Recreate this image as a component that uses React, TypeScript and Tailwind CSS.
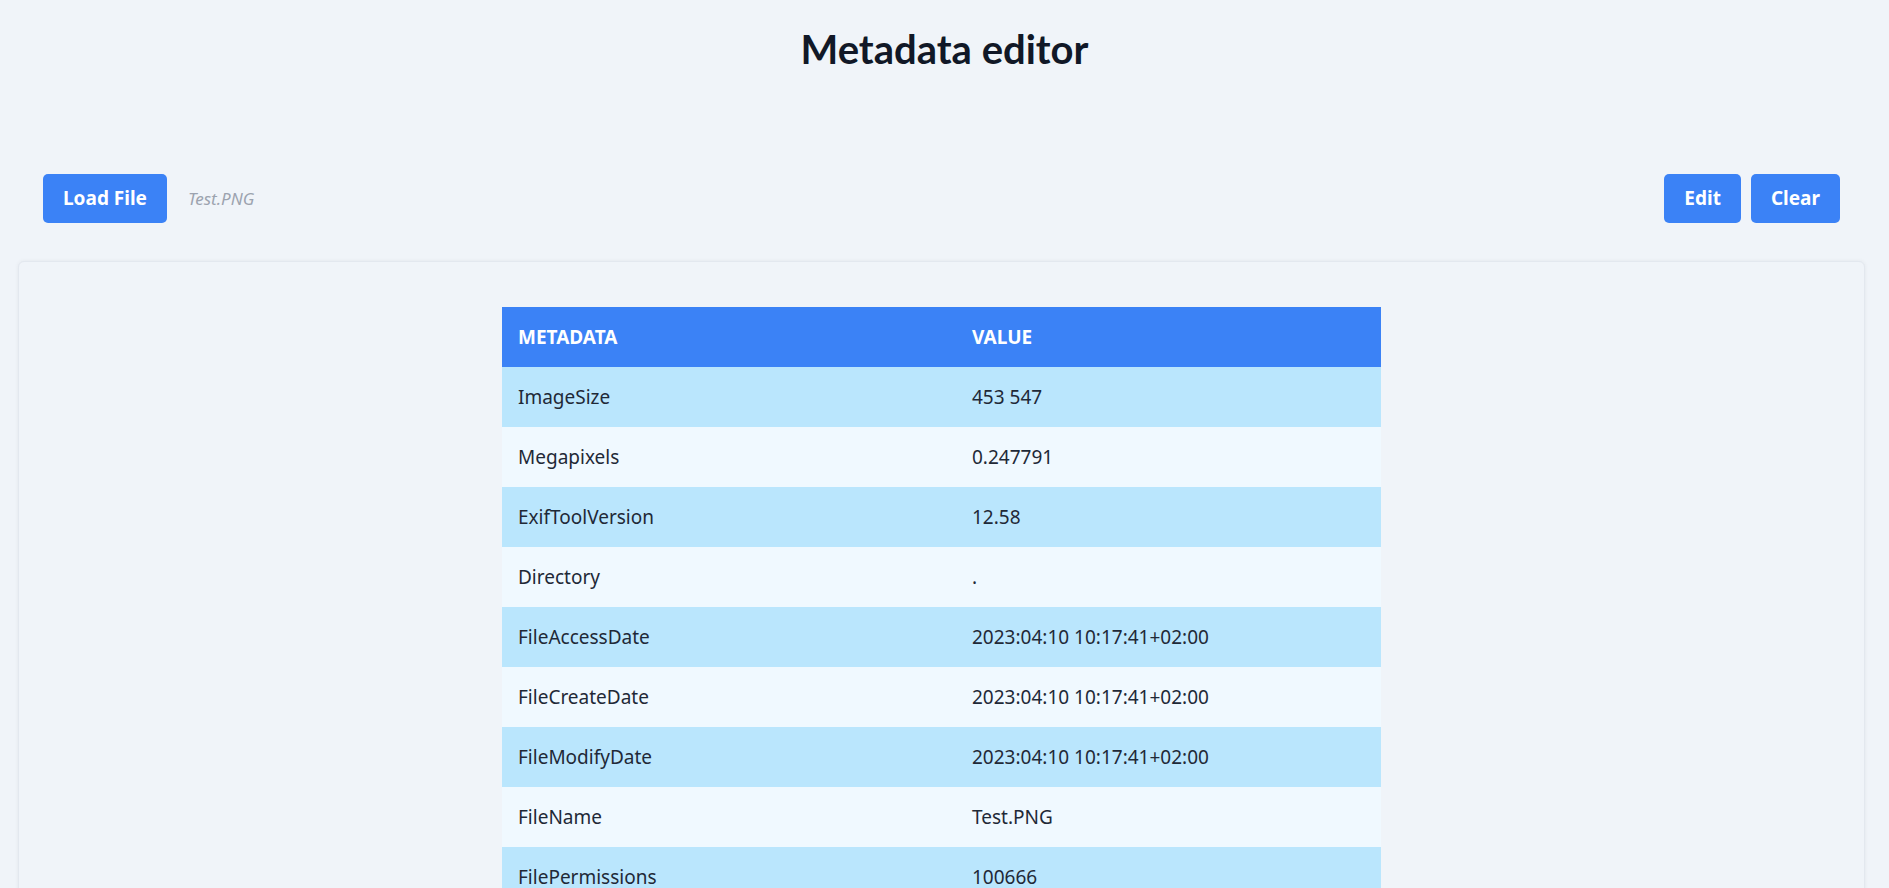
import React from 'react';

const rows: [string, string][] = [
  ['ImageSize', '453 547'],
  ['Megapixels', '0.247791'],
  ['ExifToolVersion', '12.58'],
  ['Directory', '.'],
  ['FileAccessDate', '2023:04:10 10:17:41+02:00'],
  ['FileCreateDate', '2023:04:10 10:17:41+02:00'],
  ['FileModifyDate', '2023:04:10 10:17:41+02:00'],
  ['FileName', 'Test.PNG'],
  ['FilePermissions', '100666'],
  ['FileSize', '12 kB'],
  ['FileType', 'PNG'],
  ['FileTypeExtension', 'png'],
  ['MIMEType', 'image/png'],
  ['ImageWidth', '453'],
  ['ImageHeight', '547'],
];

export default function App() {
  return (
    <div className="min-h-screen bg-[#f0f4f9] text-[#111827] font-['Noto_Sans',sans-serif]">
      <h1 className="pt-[23px] text-center font-['Lato',sans-serif] text-[40px] font-bold leading-[52px] text-[#111827]">
        Metadata editor
      </h1>

      <div className="mt-[99px] flex items-center justify-between pl-[43px] pr-[49px]">
        <div className="flex items-center gap-[21px]">
          <button className="h-[49px] rounded-[5px] bg-[#3b82f6] px-[20px] text-[19px] font-bold text-white">
            Load File
          </button>
          <span className="text-[17px] italic text-[#9ca3af]">Test.PNG</span>
        </div>
        <div className="flex items-center gap-[10px]">
          <button className="h-[49px] rounded-[5px] bg-[#3b82f6] px-[20px] text-[19px] font-bold text-white">
            Edit
          </button>
          <button className="h-[49px] rounded-[5px] bg-[#3b82f6] px-[20px] text-[19px] font-bold text-white">
            Clear
          </button>
        </div>
      </div>

      <div className="ml-[18px] mr-[24px] mt-[38px] rounded-[6px] border border-[#e3e8ef] bg-[#f0f4f9] pt-[45px] pb-[40px] shadow-[0_0_4px_rgba(0,0,0,0.06)]">
        <table className="mx-auto w-[879px] border-collapse text-left text-[19px]">
          <thead>
            <tr className="h-[60px] bg-[#3b82f6] text-white">
              <th className="w-[454px] px-[16px] font-bold uppercase">Metadata</th>
              <th className="px-[16px] font-bold uppercase">Value</th>
            </tr>
          </thead>
          <tbody>
            {rows.map(([k, v], i) => (
              <tr key={k} className={i % 2 === 0 ? 'h-[60px] bg-[#bae6fd]' : 'h-[60px] bg-[#f0f9ff]'}>
                <td className="px-[16px] text-[#1f2937]">{k}</td>
                <td className="px-[16px] text-[#1f2937]">{v}</td>
              </tr>
            ))}
          </tbody>
        </table>
      </div>
    </div>
  );
}
